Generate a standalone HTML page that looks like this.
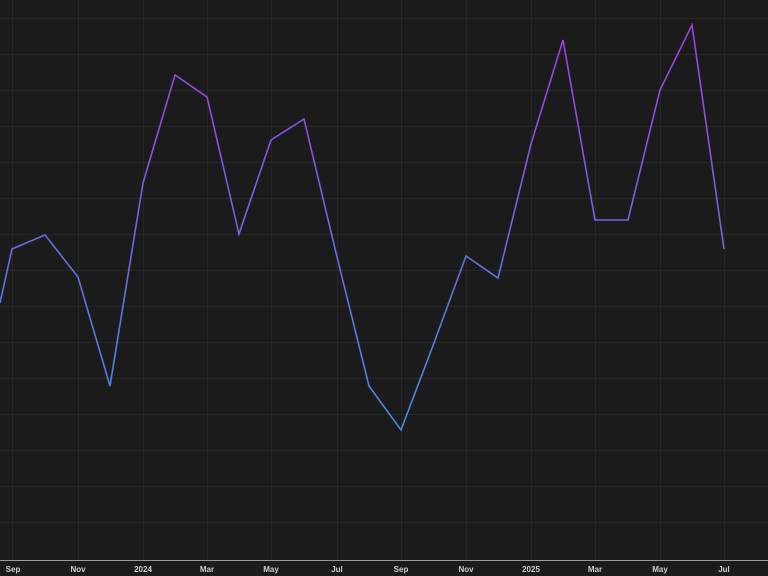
<!DOCTYPE html>
<html><head><meta charset="utf-8"><style>
html,body{margin:0;padding:0;background:#1b1b1b;width:768px;height:576px;overflow:hidden}
svg{display:block}
text{font-family:"Liberation Sans",sans-serif;font-size:8px;font-weight:bold;fill:#cfcfcf}
</style></head><body>
<svg width="768" height="576" viewBox="0 0 768 576">
<defs><linearGradient id="g" gradientUnits="userSpaceOnUse" x1="0" y1="430" x2="0" y2="25">
<stop offset="0" stop-color="#3f8ee0"/><stop offset="0.5" stop-color="#6f66e0"/><stop offset="1" stop-color="#a43ce0"/></linearGradient></defs>
<rect width="768" height="576" fill="#1b1b1b"/>
<g stroke="#262626" stroke-width="1">
<path d="M0 18.5H768M0 54.5H768M0 90.5H768M0 126.5H768M0 162.5H768M0 198.5H768M0 234.5H768M0 270.5H768M0 306.5H768M0 342.5H768M0 378.5H768M0 414.5H768M0 450.5H768M0 486.5H768M0 522.5H768"/>
<path d="M12.5 0V560M78.5 0V560M143.5 0V560M207.5 0V560M271.5 0V560M337.5 0V560M401.5 0V560M466.5 0V560M531.5 0V560M595.5 0V560M660.5 0V560M724.5 0V560"/>
</g>
<path d="M0 560.5H768" stroke="#9a9a9a" stroke-width="1"/>
<polyline fill="none" stroke="url(#g)" stroke-width="1.6" stroke-linejoin="miter" points="0,303 12,249 45,235 78,277 110,386 143,183 175,75 207,97 239,234 271,140 304,119 337,257 369,386 401,430 434,343 466,256 498,278 531,144 563,40 595,220 628,220 660,90 692,25 724,249"/>
<g text-anchor="middle">
<text x="13" y="572">Sep</text><text x="78" y="572">Nov</text><text x="143" y="572">2024</text>
<text x="207" y="572">Mar</text><text x="271" y="572">May</text><text x="337" y="572">Jul</text>
<text x="401" y="572">Sep</text><text x="466" y="572">Nov</text><text x="531" y="572">2025</text>
<text x="595" y="572">Mar</text><text x="660" y="572">May</text><text x="724" y="572">Jul</text>
</g>
</svg>
</body></html>
